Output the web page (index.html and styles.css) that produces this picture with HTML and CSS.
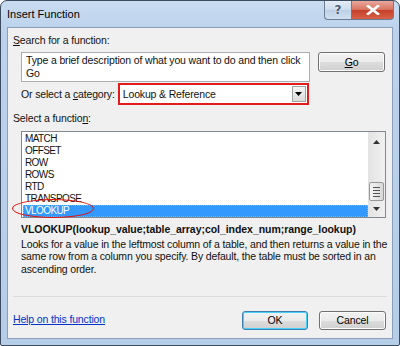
FILE: index.html
```html
<!DOCTYPE html>
<html lang="en">
	<head>
		<meta charset="UTF-8" />
		<title>Insert Function</title>
		<link rel="stylesheet" href="styles.css">
	</head>
	<body>
		<div class="window">
			<div class="titlebar">
				<span class="title">Insert Function</span>
				<div class="caption-buttons">
					<div class="cap-btn help-btn">?</div>
					<div class="cap-btn close-btn">
						<svg width="14" height="10" viewBox="0 0 14 10">
							<path d="M2 1 L12 9 M12 1 L2 9" stroke="#fff" stroke-width="2.6" stroke-linecap="square" />
						</svg>
					</div>
				</div>
			</div>

			<div class="client">
				<div class="label"><u>S</u>earch for a function:</div>
				<div class="search-row">
					<div class="textbox">Type a brief description of what you want to do and then click Go</div>
					<button class="btn"><u>G</u>o</button>
				</div>

				<div class="category-row">
					<span>Or select a <u>c</u>ategory:</span>
					<div class="combo">
						<span class="combo-text">Lookup &amp; Reference</span>
						<span class="combo-arrow">
							<svg width="7" height="4" viewBox="0 0 7 4"><path d="M0 0 H7 L3.5 4 Z" fill="#000" /></svg>
						</span>
					</div>
				</div>

				<div class="label">Select a functio<u>n</u>:</div>
				<div class="listbox">
					<ul class="items">
						<li>MATCH</li>
						<li>OFFSET</li>
						<li>ROW</li>
						<li>ROWS</li>
						<li>RTD</li>
						<li>TRANSPOSE</li>
						<li class="selected">VLOOKUP</li>
					</ul>
					<div class="scrollbar">
						<svg class="arrow" width="7" height="4" viewBox="0 0 7 4"><path d="M0 4 H7 L3.5 0 Z" fill="#333" /></svg>
						<div class="thumb"><i></i><i></i><i></i><i></i></div>
						<svg class="arrow" width="7" height="4" viewBox="0 0 7 4"><path d="M0 0 H7 L3.5 4 Z" fill="#333" /></svg>
					</div>
					<div class="circle"></div>
				</div>

				<div class="signature">VLOOKUP(lookup_value;table_array;col_index_num;range_lookup)</div>
				<p class="description">Looks for a value in the leftmost column of a table, and then returns a value in the same row from a column you specify. By default, the table must be sorted in an ascending order.</p>

				<hr class="separator" />

				<div class="footer">
					<a href="#" class="help-link">Help on this function</a>
					<div class="footer-buttons">
						<button class="btn default">OK</button>
						<button class="btn">Cancel</button>
					</div>
				</div>
			</div>
		</div>
	</body>
</html>
```

FILE: styles.css
```css
body {
	margin: 0;
	background: #fff;
	font-family: "Liberation Sans", sans-serif;
	font-size: 10.5px;
	letter-spacing: -0.15px;
	color: #111;
}

.window {
	width: 400px;
	height: 346px;
	box-sizing: border-box;
	display: flex;
	flex-direction: column;
	border: 1px solid #3d4b5e;
	border-radius: 7px 7px 2px 2px;
	background: linear-gradient(#c8dcf1, #bcd2ec 30px, #b6cde8);
}

/* title bar */
.titlebar {
	height: 26px;
	display: flex;
	justify-content: space-between;
	align-items: flex-start;
}

.title {
	font-size: 11px;
	letter-spacing: 0;
	margin: 7px 0 0 6px;
	color: #000;
}

.caption-buttons {
	display: flex;
	margin-right: 5px;
}

.cap-btn {
	height: 19px;
	display: flex;
	align-items: center;
	justify-content: center;
	border: 1px solid #6c7d92;
	border-top: none;
	box-sizing: border-box;
}

.help-btn {
	width: 27px;
	border-radius: 0 0 0 4px;
	border-right: none;
	background: linear-gradient(#e4edf7, #ccdbed 50%, #bccfe6 51%, #d2e1f1);
	color: #4b5c72;
	font-family: "DejaVu Sans", sans-serif;
	font-weight: bold;
	font-size: 12px;
	text-shadow: 0 0 2px #fff;
}

.close-btn {
	width: 43px;
	border-radius: 0 0 4px 0;
	background: linear-gradient(#e9a89c, #d8715f 50%, #c5402a 51%, #d8614a);
}

/* client area */
.client {
	flex: 1;
	margin: 0 6px 6px 6px;
	border: 1px solid #8c9fb8;
	background: #f0f0f0;
	padding: 5px 0 0 5px;
	display: flex;
	flex-direction: column;
}

.label {
	line-height: 14px;
}

.search-row {
	display: flex;
	gap: 8px;
	align-items: flex-start;
	margin: 5px 0 0 8px;
}

.textbox {
	width: 289px;
	height: 30px;
	box-sizing: border-box;
	border: 1px solid #abadb3;
	background: #fff;
	padding: 1px 4px;
	line-height: 13px;
}

.btn {
	width: 67px;
	height: 20px;
	padding: 0;
	font-family: inherit;
	font-size: 10.5px;
	letter-spacing: -0.15px;
	color: #000;
	border: 1px solid #707070;
	border-radius: 3px;
	background: linear-gradient(#f2f2f2, #ebebeb 50%, #dddddd 51%, #cfcfcf);
	box-shadow: inset 0 0 0 1px #fcfcfc;
}

.btn.default {
	border-color: #3c7fb1;
	box-shadow: inset 0 0 0 1px #48d0f8;
	width: 66px;
}

.category-row {
	display: flex;
	align-items: center;
	gap: 3px;
	margin: 1px 0 0 8px;
}

.combo {
	width: 191px;
	height: 22px;
	box-sizing: border-box;
	border: 2px solid #e21b1b;
	background: #fff;
	display: flex;
	align-items: center;
	justify-content: space-between;
	padding: 0 1px 0 3px;
}

.combo-arrow {
	width: 14px;
	height: 16px;
	box-sizing: border-box;
	border: 1px solid #a0a0a0;
	background: linear-gradient(#f4f4f4, #dcdcdc);
	display: flex;
	align-items: center;
	justify-content: center;
}

.category-row + .label {
	margin-top: 6px;
}

/* function list */
.listbox {
	position: relative;
	margin: 6px 0 0 8px;
	width: 365px;
	height: 87px;
	box-sizing: border-box;
	border: 1px solid #828790;
	background: #fff;
	display: flex;
}

.items {
	list-style: none;
	margin: 0;
	padding: 1px 0 0 1px;
	flex: 1;
	font-size: 10px;
	letter-spacing: -0.6px;
}

.items li {
	height: 12px;
	line-height: 12px;
	padding-left: 2px;
}

.items li.selected {
	background: #3399ff;
	color: #fff;
	outline: 1px dotted #e8a050;
	outline-offset: -1px;
}

.scrollbar {
	width: 17px;
	background: linear-gradient(90deg, #e3e3e3, #f0f0f0);
	display: flex;
	flex-direction: column;
	align-items: center;
	padding: 8px 0 6px 0;
}

.scrollbar .arrow:last-child {
	margin-top: 6px;
}

.thumb {
	margin-top: auto;
	width: 15px;
	height: 19px;
	box-sizing: border-box;
	border: 1px solid #979797;
	border-radius: 2px;
	background: linear-gradient(90deg, #f3f3f3, #d8d8d8);
	display: flex;
	flex-direction: column;
	align-items: center;
	justify-content: center;
	gap: 2px;
}

.thumb i {
	width: 7px;
	height: 1px;
	background: #555;
}

.circle {
	position: absolute;
	left: -10px;
	top: 67px;
	width: 80px;
	height: 17px;
	border: 1.5px solid #e3120b;
	border-radius: 50%;
}

.signature {
	font-weight: bold;
	letter-spacing: -0.05px;
	margin: 4px 0 0 8px;
	line-height: 14px;
}

.description {
	margin: 2px 0 0 8px;
	line-height: 12.3px;
	width: 370px;
}

.separator {
	margin: 21px 5px 0 0;
	border: none;
	border-top: 1px solid #dcdcdc;
	height: 0;
}

.footer {
	display: flex;
	justify-content: space-between;
	align-items: center;
	margin-top: 14px;
}

.help-link {
	color: #0033cc;
	margin-bottom: 3px;
}

.footer-buttons {
	display: flex;
	gap: 11px;
	margin-right: 6px;
}

.footer-buttons .btn {
	height: 19px;
}
```
